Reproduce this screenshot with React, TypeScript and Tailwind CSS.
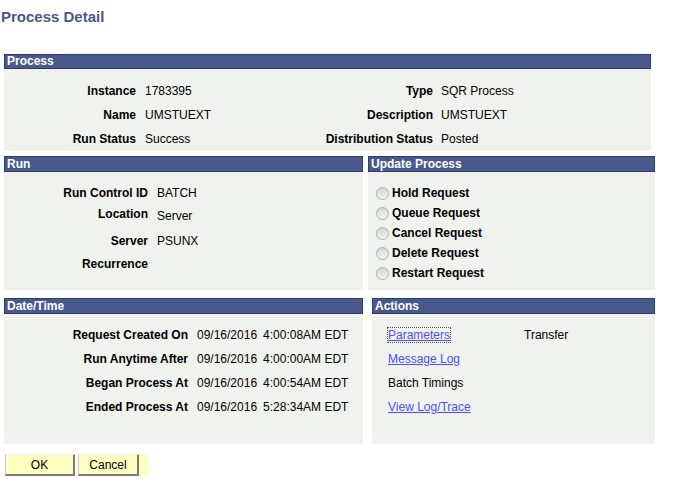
import type { ReactNode } from "react";

const FONT = "font-['Liberation_Sans',Arial,sans-serif]";

function Section({
  title,
  className,
  headerClass = "h-[15px]",
  bodyClass,
  children,
}: {
  title: string;
  className?: string;
  headerClass?: string;
  bodyClass?: string;
  children: ReactNode;
}) {
  return (
    <section className={`flex flex-col ${className ?? ""}`}>
      <div
        className={`flex items-center border border-[#2e3b6c] bg-[#4a598b] pl-[2px] text-[12px] font-bold leading-[13px] text-white ${headerClass}`}
      >
        {title}
      </div>
      <div className={`bg-[#f0f2ed] ${bodyClass ?? ""}`}>{children}</div>
    </section>
  );
}

const Label = ({ children, w }: { children: ReactNode; w: string }) => (
  <span className={`${w} shrink-0 text-right font-bold`}>{children}</span>
);

function Radio({ label }: { label: string }) {
  return (
    <div className="flex h-[20px] items-center">
      <span className="ml-[8px] h-[13px] w-[13px] rounded-full border border-[#b0b0b0] bg-[linear-gradient(#d6d6d6,#f2f2f2)]" />
      <span className="ml-[3px] font-bold">{label}</span>
    </div>
  );
}

const dates = [
  ["Request Created On", "4:00:08AM EDT"],
  ["Run Anytime After", "4:00:00AM EDT"],
  ["Began Process At", "4:00:54AM EDT"],
  ["Ended Process At", "5:28:34AM EDT"],
];

export default function App() {
  return (
    <div className={`h-[494px] w-[677px] bg-white text-[12px] leading-[14px] text-black ${FONT}`}>
      <h1 className="pl-[1px] pt-[8px] text-[15px] font-bold leading-[17px] text-[#4a5889]">
        Process Detail
      </h1>

      <Section title="Process" className="ml-[4px] mt-[29px] w-[647px]" bodyClass="h-[82px] pt-[10px]">
        {[
          ["Instance", "1783395", "Type", "SQR Process", "h-[24px]"],
          ["Name", "UMSTUEXT", "Description", "UMSTUEXT", "h-[24px]"],
          ["Run Status", "Success", "Distribution Status", "Posted", "h-[23px]"],
        ].map(([l1, v1, l2, v2, h]) => (
          <div key={l1} className={`flex items-center ${h}`}>
            <Label w="w-[132px]">{l1}</Label>
            <span className="ml-[9px] w-[148px]">{v1}</span>
            <Label w="w-[140px]">{l2}</Label>
            <span className="ml-[8px]">{v2}</span>
          </div>
        ))}
      </Section>

      <div className="ml-[4px] mt-[5px] flex">
        <Section title="Run" className="w-[359px]" headerClass="h-[16px]" bodyClass="h-[118px]">
          <div className="mt-[14px] flex">
            <Label w="w-[144px]">Run Control ID</Label>
            <span className="ml-[9px]">BATCH</span>
          </div>
          <div className="mt-[7px] flex">
            <Label w="w-[144px]">Location</Label>
            <span className="ml-[9px] translate-y-[2px]">Server</span>
          </div>
          <div className="mt-[13px] flex">
            <Label w="w-[144px]">Server</Label>
            <span className="ml-[9px]">PSUNX</span>
          </div>
          <div className="mt-[9px] flex">
            <Label w="w-[144px]">Recurrence</Label>
          </div>
        </Section>

        <Section
          title="Update Process"
          className="ml-[5px] w-[287px]"
          headerClass="h-[16px]"
          bodyClass="h-[118px] pt-[11px]"
        >
          {["Hold Request", "Queue Request", "Cancel Request", "Delete Request", "Restart Request"].map((r) => (
            <Radio key={r} label={r} />
          ))}
        </Section>
      </div>

      <div className="ml-[4px] mt-[8px] flex">
        <Section title="Date/Time" className="w-[359px]" headerClass="h-[16px]" bodyClass="h-[130px] pt-[9px]">
          {dates.map(([l, t]) => (
            <div key={l} className="flex h-[24px] items-center">
              <Label w="w-[184px]">{l}</Label>
              <span className="ml-[9px]">09/16/2016</span>
              <span className="ml-[6px]">{t}</span>
            </div>
          ))}
        </Section>

        <Section
          title="Actions"
          className="ml-[9px] w-[283px]"
          headerClass="h-[16px]"
          bodyClass="h-[130px] pt-[9px] pl-[16px]"
        >
          <div className="flex h-[24px] items-center">
            <a className="w-[136px]">
              <span className="text-[#4d4dff] underline outline-1 outline-dotted outline-[#555]">Parameters</span>
            </a>
            <span>Transfer</span>
          </div>
          <div className="flex h-[24px] items-center">
            <a className="text-[#4d4dff] underline">Message Log</a>
          </div>
          <div className="flex h-[24px] items-center">Batch Timings</div>
          <div className="flex h-[24px] items-center">
            <a className="text-[#4d4dff] underline">View Log/Trace</a>
          </div>
        </Section>
      </div>

      <div className="ml-[5px] mt-[10px] flex h-[22px]">
        <button className="h-[22px] w-[70px] border-b-2 border-l border-r-2 border-t border-b-[#7a7a7a] border-l-[#c8c8c8] border-r-[#7a7a7a] border-t-[#f4f4f4] bg-[#ffffc0] text-[12px] leading-[14px]">
          OK
        </button>
        <div className="ml-[3px] h-[22px] w-[70px] bg-[#ffffc0]">
          <button className="h-[22px] w-[61px] border-b-2 border-l border-r-2 border-t border-b-[#7a7a7a] border-l-[#c8c8c8] border-r-[#7a7a7a] border-t-[#f4f4f4] bg-[#ffffc0] text-[12px] leading-[14px]">
            Cancel
          </button>
        </div>
      </div>
    </div>
  );
}
